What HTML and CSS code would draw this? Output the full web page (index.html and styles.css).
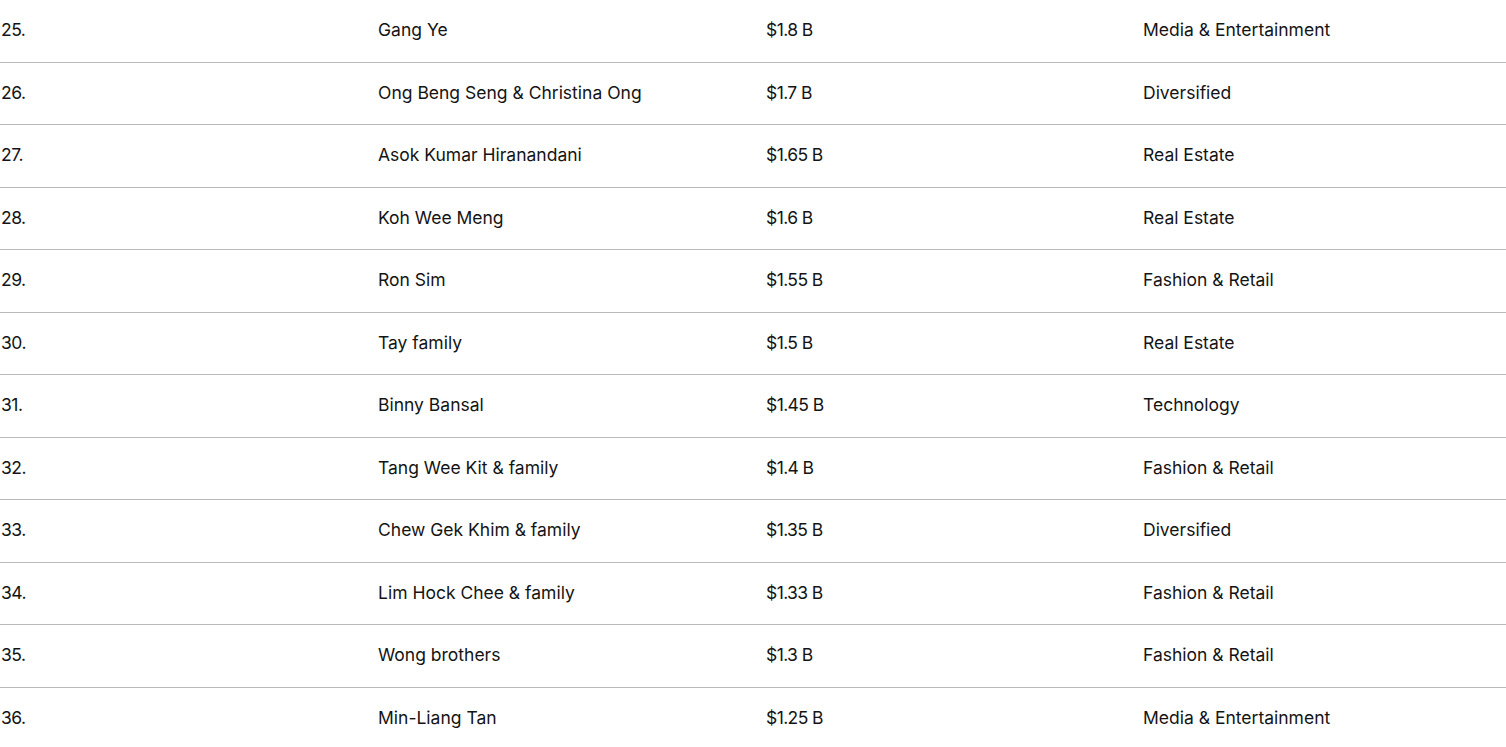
FILE: index.html
```html
<!DOCTYPE html>
<html lang="en">
<head>
<meta charset="utf-8">
<title>Rich list</title>
<link rel="stylesheet" href="styles.css">
</head>
<body>
<div class="list">
  <div class="row"><span class="rank">25.</span><span>Gang Ye</span><span class="worth">$1.8 B</span><span>Media &amp; Entertainment</span></div>
  <div class="row"><span class="rank">26.</span><span>Ong Beng Seng &amp; Christina Ong</span><span class="worth">$1.7 B</span><span>Diversified</span></div>
  <div class="row"><span class="rank">27.</span><span>Asok Kumar Hiranandani</span><span class="worth">$1.65 B</span><span>Real Estate</span></div>
  <div class="row"><span class="rank">28.</span><span>Koh Wee Meng</span><span class="worth">$1.6 B</span><span>Real Estate</span></div>
  <div class="row"><span class="rank">29.</span><span>Ron Sim</span><span class="worth">$1.55 B</span><span>Fashion &amp; Retail</span></div>
  <div class="row"><span class="rank">30.</span><span>Tay family</span><span class="worth">$1.5 B</span><span>Real Estate</span></div>
  <div class="row"><span class="rank">31.</span><span>Binny Bansal</span><span class="worth">$1.45 B</span><span>Technology</span></div>
  <div class="row"><span class="rank">32.</span><span>Tang Wee Kit &amp; family</span><span class="worth">$1.4 B</span><span>Fashion &amp; Retail</span></div>
  <div class="row"><span class="rank">33.</span><span>Chew Gek Khim &amp; family</span><span class="worth">$1.35 B</span><span>Diversified</span></div>
  <div class="row"><span class="rank">34.</span><span>Lim Hock Chee &amp; family</span><span class="worth">$1.33 B</span><span>Fashion &amp; Retail</span></div>
  <div class="row"><span class="rank">35.</span><span>Wong brothers</span><span class="worth">$1.3 B</span><span>Fashion &amp; Retail</span></div>
  <div class="row"><span class="rank">36.</span><span>Min-Liang Tan</span><span class="worth">$1.25 B</span><span>Media &amp; Entertainment</span></div>
</div>
</body>
</html>
```
FILE: styles.css
```css
html, body {
  margin: 0;
  padding: 0;
  background: #fff;
}
body {
  font-family: Inter, "Noto Sans", sans-serif;
  font-size: 17.5px;
  color: #141414;
  overflow: hidden;
}
.list {
  display: flex;
  flex-direction: column;
}
.row {
  display: grid;
  grid-template-columns: 377px 388px 377px 1fr;
  align-items: center;
  box-sizing: border-box;
  height: 62.5px;
  padding: 0 0 2px 1px;
  border-bottom: 1px solid #bababa;
}
.row:last-child {
  border-bottom: none;
}
.rank {
  letter-spacing: -0.5px;
}
.worth {
  letter-spacing: -0.6px;
}
```
